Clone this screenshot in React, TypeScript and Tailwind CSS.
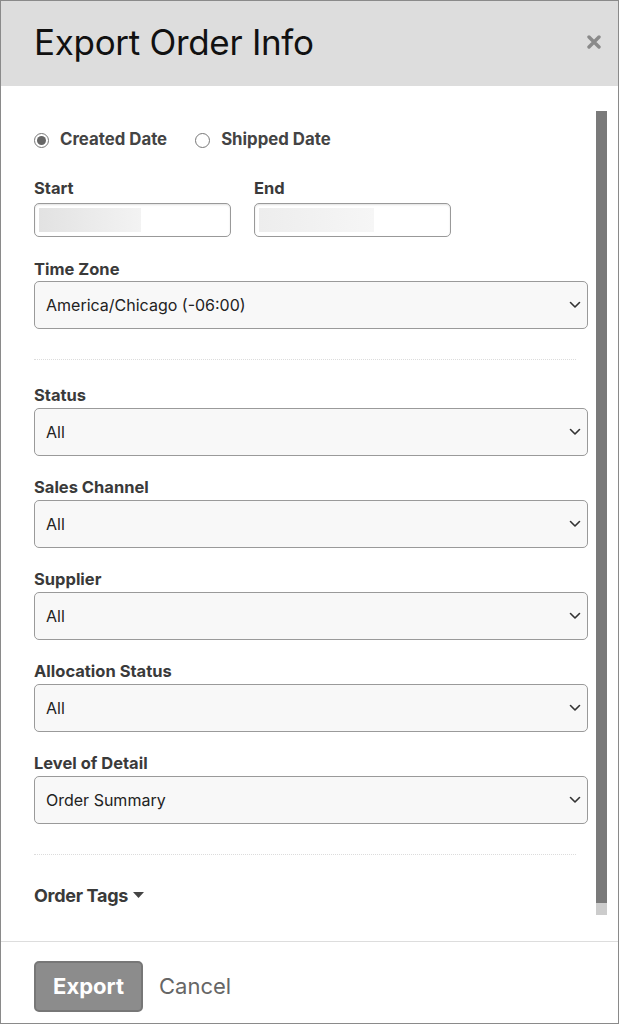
import React from "react";

const font = { fontFamily: "Inter, 'Liberation Sans', sans-serif" };

function Chevron() {
  return (
    <svg width="12" height="8" viewBox="0 0 12 8" className="shrink-0">
      <path d="M1.5 1.5 L6 6 L10.5 1.5" fill="none" stroke="#333" strokeWidth="1.6" strokeLinecap="round" strokeLinejoin="round" />
    </svg>
  );
}

function SelectField({ label, value, labelGap = "mt-[21px]", selGap = "mt-[3px]" }: { label: string; value: string; labelGap?: string; selGap?: string }) {
  return (
    <div className={labelGap}>
      <div className="h-5 text-[16.5px] leading-5 font-bold text-[#3a3a3a]">{label}</div>
      <div className={`${selGap} h-[48px] w-[554px] rounded-[5px] border border-[#9a9a9a] bg-[#f8f8f8] flex items-center justify-between pl-[11px] pr-[6px] text-[16px] text-[#222]`}>
        <span>{value}</span>
        <Chevron />
      </div>
    </div>
  );
}

function Radio({ checked, label }: { checked: boolean; label: string }) {
  return (
    <div className="flex items-center gap-[11px]">
      <div className="w-[15px] h-[15px] rounded-full border border-[#777] flex items-center justify-center bg-white">
        {checked && <div className="w-[9px] h-[9px] rounded-full bg-[#666]" />}
      </div>
      <span className="text-[16.8px] font-bold text-[#444]">{label}</span>
    </div>
  );
}

function DateInput({ from, to, blockW }: { from: string; to: string; blockW: string }) {
  return (
    <div className="h-[34px] w-[197px] rounded-[5px] border border-[#999] bg-white shadow-[inset_0_1px_2px_rgba(0,0,0,0.12)] p-[4px] flex">
      <div className={`${blockW} h-full bg-gradient-to-r ${from} ${to}`} />
    </div>
  );
}

export default function App() {
  return (
    <div style={font} className="w-[619px] h-[1024px] bg-white border border-[#8a8a8a] flex flex-col overflow-hidden">
      <div className="h-[85px] shrink-0 bg-[#dddddd] flex items-center justify-between pl-[33px] pr-[17px]">
        <h1 className="text-[35px] leading-none text-[#111] tracking-[-0.3px] mb-[2px]">Export Order Info</h1>
        <svg width="14" height="14" viewBox="0 0 14 14" className="mb-[4px]">
          <path d="M2 2 L12 12 M12 2 L2 12" stroke="#8a8a8a" strokeWidth="3.4" strokeLinecap="round" />
        </svg>
      </div>
      <div className="flex-1 flex">
        <div className="pl-[33px] pt-[42px] w-[587px]">
          <div className="h-6 flex items-center gap-[28px]">
            <Radio checked label="Created Date" />
            <Radio checked={false} label="Shipped Date" />
          </div>
          <div className="mt-[26px] flex gap-[23px]">
            <div>
              <div className="h-5 text-[16.5px] leading-5 font-bold text-[#3a3a3a]">Start</div>
              <div className="mt-[5px]"><DateInput from="from-[#e2e2e2]" to="to-[#f3f3f3]" blockW="w-[102px]" /></div>
            </div>
            <div>
              <div className="h-5 text-[16.5px] leading-5 font-bold text-[#3a3a3a]">End</div>
              <div className="mt-[5px]"><DateInput from="from-[#ededed]" to="to-[#f6f6f6]" blockW="w-[115px]" /></div>
            </div>
          </div>
          <SelectField label="Time Zone" value="America/Chicago (-06:00)" labelGap="mt-[22px]" selGap="mt-[2px]" />
          <div className="mt-[30px] w-[542px] border-t border-dotted border-[#dcdcdc]" />
          <SelectField label="Status" value="All" labelGap="mt-[25px]" />
          <SelectField label="Sales Channel" value="All" />
          <SelectField label="Supplier" value="All" />
          <SelectField label="Allocation Status" value="All" />
          <SelectField label="Level of Detail" value="Order Summary" />
          <div className="mt-[30px] w-[542px] border-t border-dotted border-[#dcdcdc]" />
          <div className="mt-[30px] h-5 flex items-center gap-[5px] text-[18px] font-bold text-[#3a3a3a] tracking-[-0.3px]">
            <span>Order Tags</span>
            <svg width="11" height="6" viewBox="0 0 11 6"><path d="M0 0 H11 L5.5 6 Z" fill="#444" /></svg>
          </div>
        </div>
        <div className="ml-[8px] mt-[25px] w-[11px] flex flex-col">
          <div className="h-[792px] bg-[#7a7a7a]" />
          <div className="h-[12px] bg-[#cccccc]" />
        </div>
      </div>
      <div className="h-[82px] shrink-0 border-t border-[#dddddd] flex items-center pl-[33px] gap-[16px] pt-[7px]">
        <div className="h-[51px] w-[109px] rounded-[5px] border-2 border-[#777] bg-[#8c8c8c] flex items-center justify-center text-[22px] font-bold text-white">Export</div>
        <span className="text-[22px] text-[#666]">Cancel</span>
      </div>
    </div>
  );
}
